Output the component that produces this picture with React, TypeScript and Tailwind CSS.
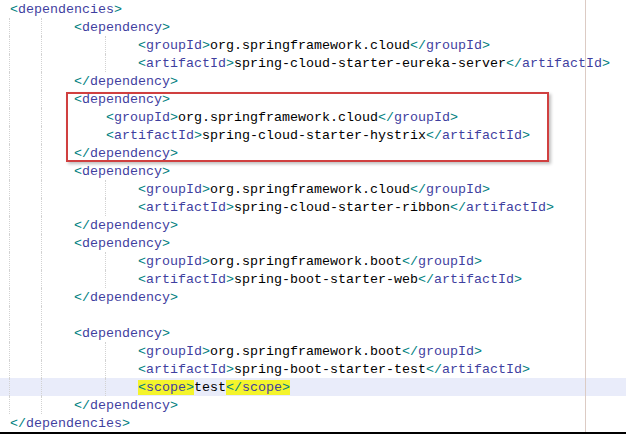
type Line = {
  indent: number;
  parts: React.ReactNode;
  guides: number[];
  current?: boolean;
};

function Tag({ name, close, hl }: { name: string; close?: boolean; hl?: boolean }) {
  return (
    <span className={hl ? "bg-[#f4f42c]" : ""}>
      <span className="text-[#008080]">{close ? "</" : "<"}</span>
      <span className="text-[#3f3f9f]">{name}</span>
      <span className="text-[#008080]">&gt;</span>
    </span>
  );
}

function Elem({ name, text, hl }: { name: string; text: string; hl?: boolean }) {
  return (
    <>
      <Tag name={name} hl={hl} />
      <span className="text-black">{text}</span>
      <Tag name={name} close hl={hl} />
    </>
  );
}

const G1 = [9, 41];
const G2 = [9, 41, 105];

const lines: Line[] = [
  { indent: 0, parts: <Tag name="dependencies" />, guides: [] },
  { indent: 8, parts: <Tag name="dependency" />, guides: G1 },
  { indent: 16, parts: <Elem name="groupId" text="org.springframework.cloud" />, guides: G2 },
  { indent: 16, parts: <Elem name="artifactId" text="spring-cloud-starter-eureka-server" />, guides: G2 },
  { indent: 8, parts: <Tag name="dependency" close />, guides: G1 },
  { indent: 8, parts: <Tag name="dependency" />, guides: G1 },
  { indent: 12, parts: <Elem name="groupId" text="org.springframework.cloud" />, guides: G1 },
  { indent: 12, parts: <Elem name="artifactId" text="spring-cloud-starter-hystrix" />, guides: G1 },
  { indent: 8, parts: <Tag name="dependency" close />, guides: G1 },
  { indent: 8, parts: <Tag name="dependency" />, guides: G1 },
  { indent: 16, parts: <Elem name="groupId" text="org.springframework.cloud" />, guides: G2 },
  { indent: 16, parts: <Elem name="artifactId" text="spring-cloud-starter-ribbon" />, guides: G2 },
  { indent: 8, parts: <Tag name="dependency" close />, guides: G1 },
  { indent: 8, parts: <Tag name="dependency" />, guides: G1 },
  { indent: 16, parts: <Elem name="groupId" text="org.springframework.boot" />, guides: G2 },
  { indent: 16, parts: <Elem name="artifactId" text="spring-boot-starter-web" />, guides: G2 },
  { indent: 8, parts: <Tag name="dependency" close />, guides: G1 },
  { indent: 0, parts: null, guides: G1 },
  { indent: 8, parts: <Tag name="dependency" />, guides: G1 },
  { indent: 16, parts: <Elem name="groupId" text="org.springframework.boot" />, guides: G2 },
  { indent: 16, parts: <Elem name="artifactId" text="spring-boot-starter-test" />, guides: G2 },
  { indent: 16, parts: <Elem name="scope" text="test" hl />, guides: G2, current: true },
  { indent: 8, parts: <Tag name="dependency" close />, guides: G1 },
  { indent: 0, parts: <Tag name="dependencies" close />, guides: [] },
];

function CodeLine({ line }: { line: Line }) {
  return (
    <div
      className={`relative h-[18px] leading-[18px] pt-[1px] pl-[10px] whitespace-pre ${
        line.current ? "bg-[#e9ecfa]" : ""
      }`}
    >
      {line.guides.map((x) => (
        <span
          key={x}
          className="absolute top-0 bottom-0 border-l border-dotted border-[#d2d2d2]"
          style={{ left: x }}
        />
      ))}
      {" ".repeat(line.indent)}
      {line.parts}
    </div>
  );
}

export default function App() {
  return (
    <div className="w-[626px] h-[434px] bg-white overflow-hidden">
      <div
        className="relative border-b-2 border-black text-[13.33px] tracking-normal"
        style={{ fontFamily: '"Liberation Mono", "Courier New", monospace' }}
      >
        {lines.slice(0, 5).map((l, i) => (
          <CodeLine key={i} line={l} />
        ))}
        <div className="relative">
          {lines.slice(5, 9).map((l, i) => (
            <CodeLine key={i} line={l} />
          ))}
          <div className="absolute left-[66px] w-[483px] top-[2px] bottom-[0px] border-2 border-[#d04040] shadow-[2px_2px_3px_rgba(0,0,0,0.25)] pointer-events-none" />
        </div>
        {lines.slice(9).map((l, i) => (
          <CodeLine key={i} line={l} />
        ))}
        <div className="absolute top-0 bottom-0 left-[585px] border-l border-[#dccbc4]" />
      </div>
    </div>
  );
}
